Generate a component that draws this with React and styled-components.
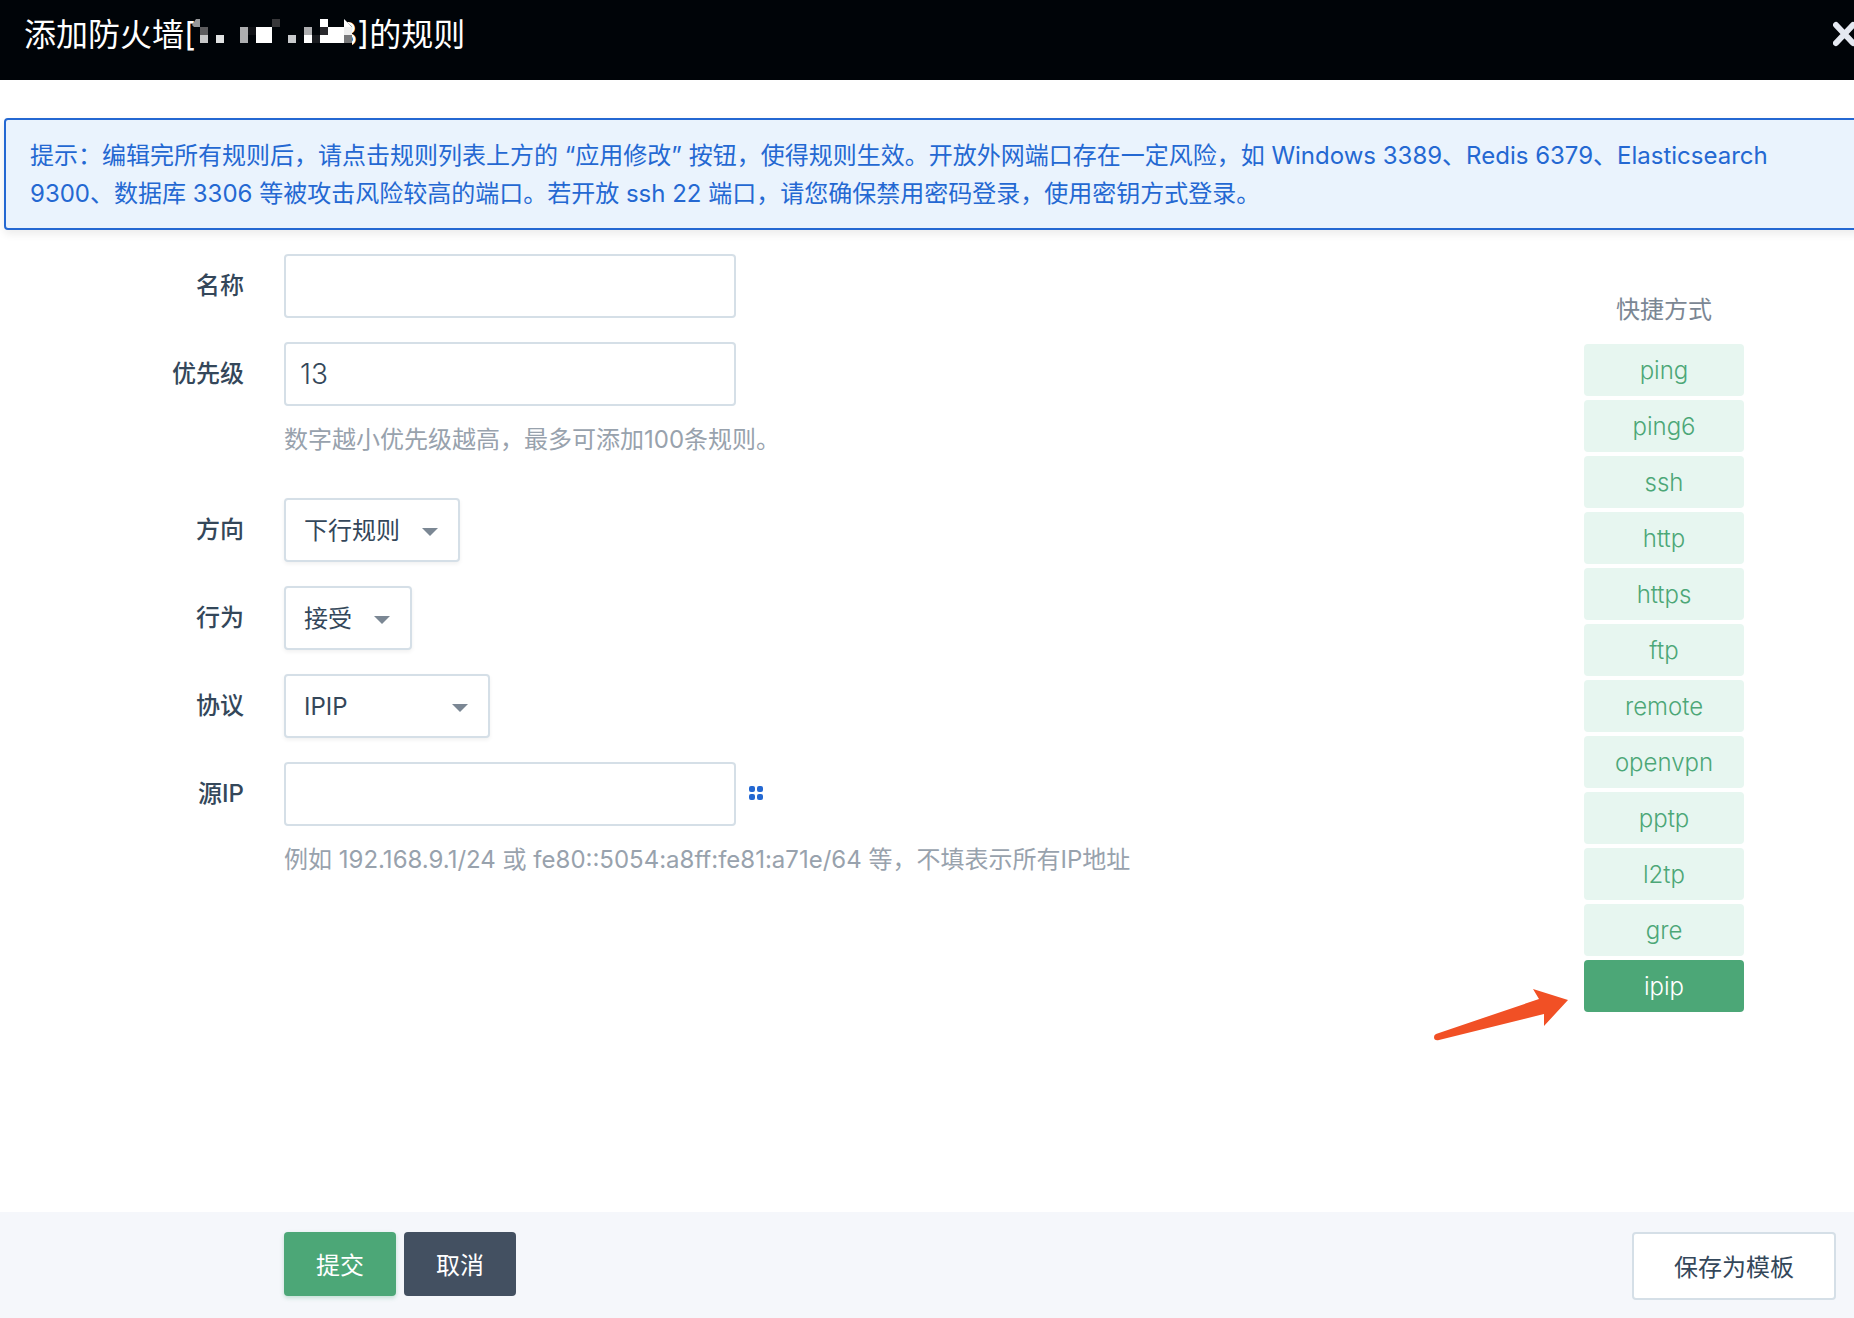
import React, { useState } from "react";
import styled, { createGlobalStyle } from "styled-components";

const GlobalStyle = createGlobalStyle`
    * {
        box-sizing: border-box;
    }

    body {
        margin: 0;
        overflow-x: hidden;
        background: #fff;
    }

    body, button, input, select {
        font-family: Inter, "Noto Sans CJK SC", sans-serif;
        font-weight: 400;
    }
`;

const Page = styled.div`
    display: flex;
    flex-direction: column;
    min-height: 100vh;
    overflow: hidden;
    font-size: 24px;
    line-height: 36px;
    color: #34475a;
`;

const Header = styled.header`
    display: flex;
    justify-content: space-between;
    height: 80px;
    padding: 10px 0 0 24px;
    background: #000408;
`;

const Title = styled.h1`
    margin: 0;
    font-size: 32px;
    line-height: 50px;
    font-weight: 400;
    color: #fff;
    white-space: nowrap;
`;

const Mosaic = styled.svg`
    position: relative;
    margin: 0 -14px 0 -4px;
    vertical-align: -1px;
`;

const CloseButton = styled.button`
    display: flex;
    align-items: center;
    height: 48px;
    margin-right: -4px;
    padding: 0;
    border: 0;
    background: none;
    color: #e5e9f1;
`;

const Notice = styled.div`
    margin: 38px -8px 0 4px;
    padding: 17px 40px 15px 24px;
    border: 2px solid #2468d2;
    border-radius: 4px;
    background: #eaf3fd;
    box-shadow: 0 4px 8px rgba(0, 0, 0, 0.08);
    line-height: 38px;
    color: #2468d2;
`;

const Content = styled.main`
    display: flex;
    flex: 1;
    justify-content: space-between;
    padding: 24px 110px 24px 0;
`;

const Row = styled.div`
    display: flex;
    margin-bottom: 24px;
`;

const Label = styled.label`
    width: 244px;
    margin-right: 40px;
    line-height: 64px;
    font-weight: 500;
    text-align: right;
`;

const Line = styled.div`
    display: flex;
    align-items: center;
    gap: 12px;
`;

const TextInput = styled.input`
    width: 452px;
    height: 64px;
    padding: 0 14px;
    border: 2px solid #d5dfe7;
    border-radius: 4px;
    font-size: 28px;
    font-weight: 300;
    color: #34475a;
    outline: none;
`;

const Hint = styled.p`
    margin: 16px 0;
    color: #98a2ad;
`;

const SelectBox = styled.div`
    position: relative;
    width: ${(props) => props.$width}px;

    svg {
        position: absolute;
        top: 30px;
        right: 22px;
        pointer-events: none;
    }
`;

const StyledSelect = styled.select`
    width: 100%;
    height: 64px;
    padding: 0 18px;
    border: 2px solid #d5dfe7;
    border-radius: 4px;
    background: #fff;
    box-shadow: 0 2px 4px rgba(0, 0, 0, 0.06);
    font-size: 24px;
    color: #34475a;
    appearance: none;
    outline: none;
`;

const IconButton = styled.button`
    display: flex;
    padding: 0;
    border: 0;
    background: none;
    color: #2468d2;
`;

const Shortcuts = styled.aside`
    display: flex;
    flex-direction: column;
    gap: 4px;
    width: 160px;
    padding-top: 38px;
`;

const ShortcutsTitle = styled.h2`
    margin: 0 0 12px;
    font-size: 24px;
    line-height: 36px;
    font-weight: 400;
    text-align: center;
    color: #7b8794;
`;

const ShortcutButton = styled.button`
    position: relative;
    height: 52px;
    padding: 0;
    border: 0;
    border-radius: 4px;
    background: ${(props) => (props.$active ? "#4ca777" : "#e7f6f0")};
    font-size: 24px;
    font-weight: 300;
    color: ${(props) => (props.$active ? "#fff" : "#4ca777")};
`;

const Pointer = styled.svg`
    position: absolute;
    top: 29px;
    right: 176px;
`;

const Footer = styled.footer`
    display: flex;
    align-items: flex-start;
    gap: 8px;
    padding: 20px 18px 18px 284px;
    background: #f5f7fb;
`;

const Button = styled.button`
    width: 112px;
    height: 64px;
    padding: 0 0 2px;
    border: 0;
    border-radius: 4px;
    background: ${(props) => (props.$primary ? "#4ca777" : "#435061")};
    box-shadow: ${(props) => (props.$primary ? "0 2px 4px rgba(76, 167, 119, 0.3)" : "none")};
    font-size: 24px;
    color: #fff;
`;

const TemplateButton = styled.button`
    height: 68px;
    margin-left: auto;
    padding: 0 40px 2px;
    border: 2px solid #d5dfe7;
    border-radius: 4px;
    background: #fff;
    font-size: 24px;
    color: #34475a;
`;

const shortcuts = ["ping", "ping6", "ssh", "http", "https", "ftp", "remote", "openvpn", "pptp", "l2tp", "gre", "ipip"];

// x, y, width, height, fill
const blocks = [
    [8, 8, 8, 8, "#5c5c5e"],
    [8, 16, 8, 8, "#c6c7c8"],
    [24, 16, 8, 8, "#e0e2e2"],
    [48, 8, 8, 16, "#adaeb0"],
    [56, 8, 8, 8, "#101216"],
    [64, 8, 16, 16, "#fff"],
    [80, 0, 8, 8, "#38383a"],
    [96, 16, 8, 8, "#c8cacc"],
    [112, 8, 8, 8, "#adaeb0"],
    [112, 16, 8, 8, "#fff"],
    [120, 16, 8, 8, "#1a1c20"],
    [128, 0, 8, 8, "#fff"],
    [128, 8, 8, 8, "#29292d"],
    [128, 16, 24, 8, "#fff"],
    [136, 8, 16, 8, "#fff"],
    [152, 8, 8, 8, "#eee"],
    [152, 16, 8, 8, "#77787a"],
];

function Select({ id, width, options }) {
    return (
        <SelectBox $width={width}>
            <StyledSelect id={id}>
                {options.map((option) => (
                    <option key={option}>{option}</option>
                ))}
            </StyledSelect>
            <svg width="16" height="8" viewBox="0 0 16 8">
                <path d="M0 0h16L8 8z" fill="#7b8794" />
            </svg>
        </SelectBox>
    );
}

export default function App() {
    const [active, setActive] = useState("ipip");

    return (
        <Page>
            <GlobalStyle />
            <Header>
                <Title>
                    添加防火墙[
                    <Mosaic width="160" height="28" viewBox="0 0 160 28" aria-hidden="true">
                        <path d="M8 0h144l8 8v20H8z" fill="#000408" />
                        <path d="M0 6l4-6h4v8H2z" fill="#97989a" />
                        {blocks.map(([x, y, w, h, fill]) => (
                            <rect key={`${x}-${y}`} x={x} y={y} width={w} height={h} fill={fill} />
                        ))}
                        <path d="M152 0l8 8h-8z" fill="#fff" />
                    </Mosaic>
                    3]的规则
                </Title>
                <CloseButton aria-label="关闭">
                    <svg width="25" height="26" viewBox="0 0 25 26" fill="none" stroke="currentColor" strokeWidth="6" strokeLinecap="round">
                        <path d="M3 4l17 18M20 4L3 22" />
                    </svg>
                </CloseButton>
            </Header>

            <Notice>
                提示：编辑完所有规则后，请点击规则列表上方的 “应用修改” 按钮，使得规则生效。开放外网端口存在一定风险，如 Windows 3389、Redis 6379、Elasticsearch 9300、数据库 3306 等被攻击风险较高的端口。若开放 ssh 22 端口，请您确保禁用密码登录，使用密钥方式登录。
            </Notice>

            <Content>
                <form>
                    <Row>
                        <Label htmlFor="name">名称</Label>
                        <TextInput id="name" type="text" />
                    </Row>
                    <Row>
                        <Label htmlFor="priority">优先级</Label>
                        <div>
                            <TextInput id="priority" type="text" defaultValue="13" />
                            <Hint>数字越小优先级越高，最多可添加100条规则。</Hint>
                        </div>
                    </Row>
                    <Row>
                        <Label htmlFor="direction">方向</Label>
                        <Select id="direction" width={176} options={["下行规则"]} />
                    </Row>
                    <Row>
                        <Label htmlFor="action">行为</Label>
                        <Select id="action" width={128} options={["接受"]} />
                    </Row>
                    <Row>
                        <Label htmlFor="protocol">协议</Label>
                        <Select id="protocol" width={206} options={["IPIP"]} />
                    </Row>
                    <Row>
                        <Label htmlFor="source">源IP</Label>
                        <div>
                            <Line>
                                <TextInput id="source" type="text" />
                                <IconButton type="button" aria-label="选择IP">
                                    <svg width="16" height="16" viewBox="0 0 16 16" fill="currentColor">
                                        <rect x="1" y="0" width="6" height="6" rx="2" />
                                        <rect x="9" y="0" width="6" height="6" rx="2" />
                                        <rect x="1" y="8" width="6" height="6" rx="2" />
                                        <rect x="9" y="8" width="6" height="6" rx="2" />
                                    </svg>
                                </IconButton>
                            </Line>
                            <Hint>例如 192.168.9.1/24 或 fe80::5054:a8ff:fe81:a71e/64 等，不填表示所有IP地址</Hint>
                        </div>
                    </Row>
                </form>

                <Shortcuts>
                    <ShortcutsTitle>快捷方式</ShortcutsTitle>
                    {shortcuts.map((item) => (
                        <ShortcutButton key={item} $active={item === active} onClick={() => setActive(item)}>
                            {item}
                            {item === "ipip" && (
                                <Pointer width="134" height="52" viewBox="0 0 134 52">
                                    <path d="M2 45L105 10L99 0L134 11L110 37V25L5 51Q0 52 0 48Q0 46 2 45z" fill="#f15025" />
                                </Pointer>
                            )}
                        </ShortcutButton>
                    ))}
                </Shortcuts>
            </Content>

            <Footer>
                <Button $primary>提交</Button>
                <Button>取消</Button>
                <TemplateButton>保存为模板</TemplateButton>
            </Footer>
        </Page>
    );
}
